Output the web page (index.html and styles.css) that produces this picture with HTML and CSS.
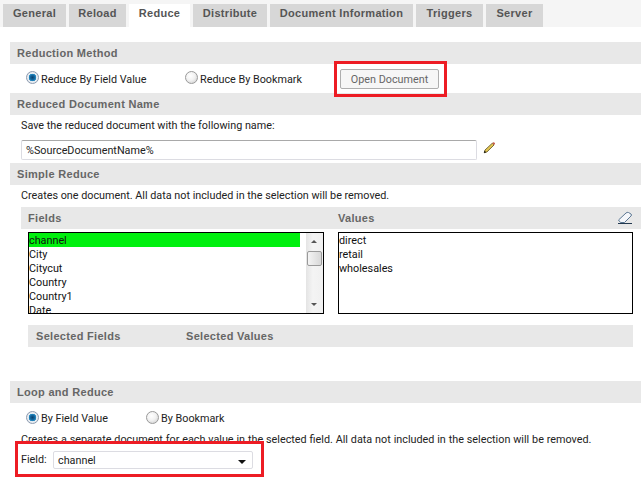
FILE: index.html
```html
<!DOCTYPE html>
<html lang="en">
<head>
<meta charset="utf-8">
<title>Reduce</title>
<link rel="stylesheet" href="styles.css">
</head>
<body>
<nav class="tabs">
  <span class="tab tab-general">General</span>
  <span class="tab tab-reload">Reload</span>
  <span class="tab tab-reduce active">Reduce</span>
  <span class="tab tab-distribute">Distribute</span>
  <span class="tab tab-info">Document Information</span>
  <span class="tab tab-triggers">Triggers</span>
  <span class="tab tab-server">Server</span>
</nav>
<main class="content">
  <h2 class="head first">Reduction Method</h2>
  <div class="radio-row method">
    <label class="radio-item item-a"><span class="radio on"></span>Reduce By Field Value</label>
    <label class="radio-item item-b"><span class="radio"></span>Reduce By Bookmark</label>
    <button class="btn">Open Document</button>
  </div>
  <h2 class="head">Reduced Document Name</h2>
  <p class="text save">Save the reduced document with the following name:</p>
  <div class="name-row">
    <div class="input">%SourceDocumentName%</div>
    <svg class="pencil" width="13" height="13" viewBox="0 0 13 13">
      <path d="M1.2 11.8 L2 9 L9.3 2.2 L11 4 L4 10.9 Z" fill="#e3c552" stroke="#5c5020" stroke-width="0.8"/>
      <path d="M9.3 2.2 L11 4 L12 3 Q12.2 2.4 11.6 1.8 L11.2 1.4 Q10.6 1 10.2 1.3 Z" fill="#c8604f"/>
      <path d="M1 12 L1.6 9.8 L3.2 11.3 Z" fill="#111"/>
    </svg>
  </div>
  <h2 class="head simple">Simple Reduce</h2>
  <p class="text creates">Creates one document. All data not included in the selection will be removed.</p>
  <div class="head sub fv-head">
    <span class="fields-title">Fields</span>
    <span class="values-title">Values</span>
    <svg class="eraser" width="16" height="14" viewBox="0 0 16 14">
      <path d="M1.5 9 L9 2 Q10 1 11.5 1.5 L14 3 Q15 4 14 5 L7.5 11.5 L3.5 11.5 Z" fill="#f4f6fa" stroke="#5b7793" stroke-width="1"/>
      <path d="M1 12.5 H15" stroke="#22384f" stroke-width="1"/>
    </svg>
  </div>
  <div class="lists">
    <div class="list fields-list">
      <div class="rows">
        <div class="row sel">channel</div>
        <div class="row">City</div>
        <div class="row">Citycut</div>
        <div class="row">Country</div>
        <div class="row">Country1</div>
        <div class="row">Date</div>
      </div>
      <div class="scrollbar">
        <span class="arrow up"></span>
        <span class="thumb"></span>
        <span class="arrow down"></span>
      </div>
    </div>
    <div class="list values-list">
      <div class="row">direct</div>
      <div class="row">retail</div>
      <div class="row">wholesales</div>
    </div>
  </div>
  <div class="head selected">
    <span class="sel-fields">Selected Fields</span>
    <span>Selected Values</span>
  </div>
  <h2 class="head loop">Loop and Reduce</h2>
  <div class="radio-row loop-radios">
    <label class="radio-item item-c"><span class="radio on"></span>By Field Value</label>
    <label class="radio-item"><span class="radio"></span>By Bookmark</label>
  </div>
  <p class="text creates-loop">Creates a separate document for each value in the selected field. All data not included in the selection will be removed.</p>
</main>
<div class="mark mark-open"></div>
<div class="mark mark-field">
  <span class="text field-label">Field:</span>
  <div class="select">channel<span class="caret"></span></div>
</div>
</body>
</html>
```
FILE: styles.css
```css
* { box-sizing: border-box; }
html, body { margin: 0; padding: 0; background: #fff; }
body {
  position: relative;
  width: 641px;
  height: 490px;
  overflow: hidden;
  font-family: Roboto, "Open Sans", sans-serif;
  font-size: 10.8px;
  color: #222;
}
.tabs {
  display: flex;
  gap: 3px;
  height: 27px;
  padding: 4px 0 0 3px;
  background: #f5f5f5;
}
.tab {
  height: 23px;
  background: #d7d7d7;
  color: #555;
  font: bold 11px/19px "Liberation Sans", Arial, sans-serif;
  letter-spacing: 0.3px;
  text-align: center;
}
.tab.active { background: #fff; }
.tab-general { width: 63px; }
.tab-reload { width: 57px; }
.tab-reduce { width: 61px; }
.tab-distribute { width: 74px; }
.tab-info { width: 143px; }
.tab-triggers { width: 67px; }
.tab-server { width: 57px; }
.content { padding-left: 10px; }
.head {
  margin: 0;
  height: 22px;
  padding-left: 7px;
  background: #e8e8e8;
  color: #666;
  font: bold 11px/23px "Liberation Sans", Arial, sans-serif;
  letter-spacing: 0.3px;
}
.first { margin-top: 15px; }
.radio-row { display: flex; align-items: center; }
.method { height: 29px; padding-left: 16px; }
.radio-item { display: flex; align-items: center; gap: 2px; padding-top: 2px; line-height: 14px; }
.item-a { width: 159px; }
.item-b { width: 155px; }
.item-c { width: 120px; }
.radio {
  width: 13px;
  height: 13px;
  border-radius: 50%;
  border: 1px solid #9a9a9a;
  background: radial-gradient(circle at 40% 35%, #fff 0, #f2f2f2 45%, #c9c9c9 100%);
  position: relative;
  top: -2px;
}
.radio.on {
  border-color: #8d9bb0;
  background: radial-gradient(circle, #08406f 0, #14689f 30%, #2a8fc6 46%, #e9eef3 52%, #dfe3e8 100%);
}
.btn {
  width: 99px;
  height: 20px;
  padding: 2px 0 0;
  border: 1px solid #aeaeae;
  border-radius: 2px;
  background: #f6f6f6;
  color: #666;
  font: 10.8px Roboto, sans-serif;
}
.text { margin: 0; line-height: 14px; }
.save { padding: 4px 0 0 11px; height: 25px; }
.name-row { display: flex; align-items: flex-start; padding-left: 11px; height: 23px; }
.input {
  width: 456px;
  height: 20px;
  padding-left: 4px;
  border: 1px solid #dcdce2;
  border-top-color: #a9a9a9;
  border-radius: 2px;
  line-height: 19px;
}
.pencil { margin: 1px 0 0 6px; }
.creates { padding: 4px 0 0 11px; height: 22px; }
.sub { position: relative; margin-left: 11px; padding-left: 7px; }
.values-title { position: absolute; left: 317px; top: 0; }
.eraser { position: absolute; left: 596px; top: 4px; }
.lists {
  display: flex;
  gap: 14px;
  margin: 3px 0 0 18px;
}
.list {
  height: 82px;
  border: 1px solid #000;
  background: #fff;
  overflow: hidden;
  color: #111;
}
.fields-list { display: flex; width: 296px; }
.values-list { width: 295px; }
.rows { width: 277px; flex: none; }
.row { height: 14px; line-height: 16px; white-space: nowrap; }
.row.sel { background: #00f00e; width: 271px; }
.scrollbar {
  position: relative;
  width: 17px;
  height: 80px;
  background: linear-gradient(to right, #e4e4e4, #f4f4f4 40%, #f0f0f0);
}
.thumb {
  position: absolute;
  left: 1px;
  top: 18px;
  width: 15px;
  height: 15px;
  border: 1px solid #9a9a9a;
  border-radius: 2px;
  background: linear-gradient(to right, #f4f4f4, #d8d8d8);
}
.arrow {
  position: absolute;
  left: 5px;
  width: 0;
  height: 0;
  border-left: 3.5px solid transparent;
  border-right: 3.5px solid transparent;
}
.arrow.up { top: 7px; border-bottom: 3px solid #555; }
.arrow.down { top: 70px; border-top: 3px solid #555; }
.selected {
  display: flex;
  width: 605px;
  margin: 11px 0 0 18px;
  padding-left: 8px;
}
.sel-fields { width: 150px; }
.loop { margin-top: 34px; }
.loop-radios { height: 30px; padding-left: 16px; }
.creates-loop { padding-left: 11px; white-space: nowrap; word-spacing: 0.2px; }
.mark { position: absolute; border: 3px solid #ed1c24; }
.mark-open { left: 334px; top: 61px; width: 113px; height: 36px; }
.mark-field {
  left: 15px;
  top: 441px;
  width: 249px;
  height: 36px;
  display: flex;
  align-items: flex-start;
  padding: 7px 0 0 3px;
  background: #fff;
}
.field-label { width: 32px; margin-top: 2px; }
.select {
  position: relative;
  width: 200px;
  height: 18px;
  padding-left: 4px;
  border: 1px solid #dcdce2;
  border-radius: 2px;
  line-height: 18px;
}
.caret {
  position: absolute;
  right: 6px;
  top: 8px;
  width: 0;
  height: 0;
  border-left: 4px solid transparent;
  border-right: 4px solid transparent;
  border-top: 4px solid #111;
}
```
